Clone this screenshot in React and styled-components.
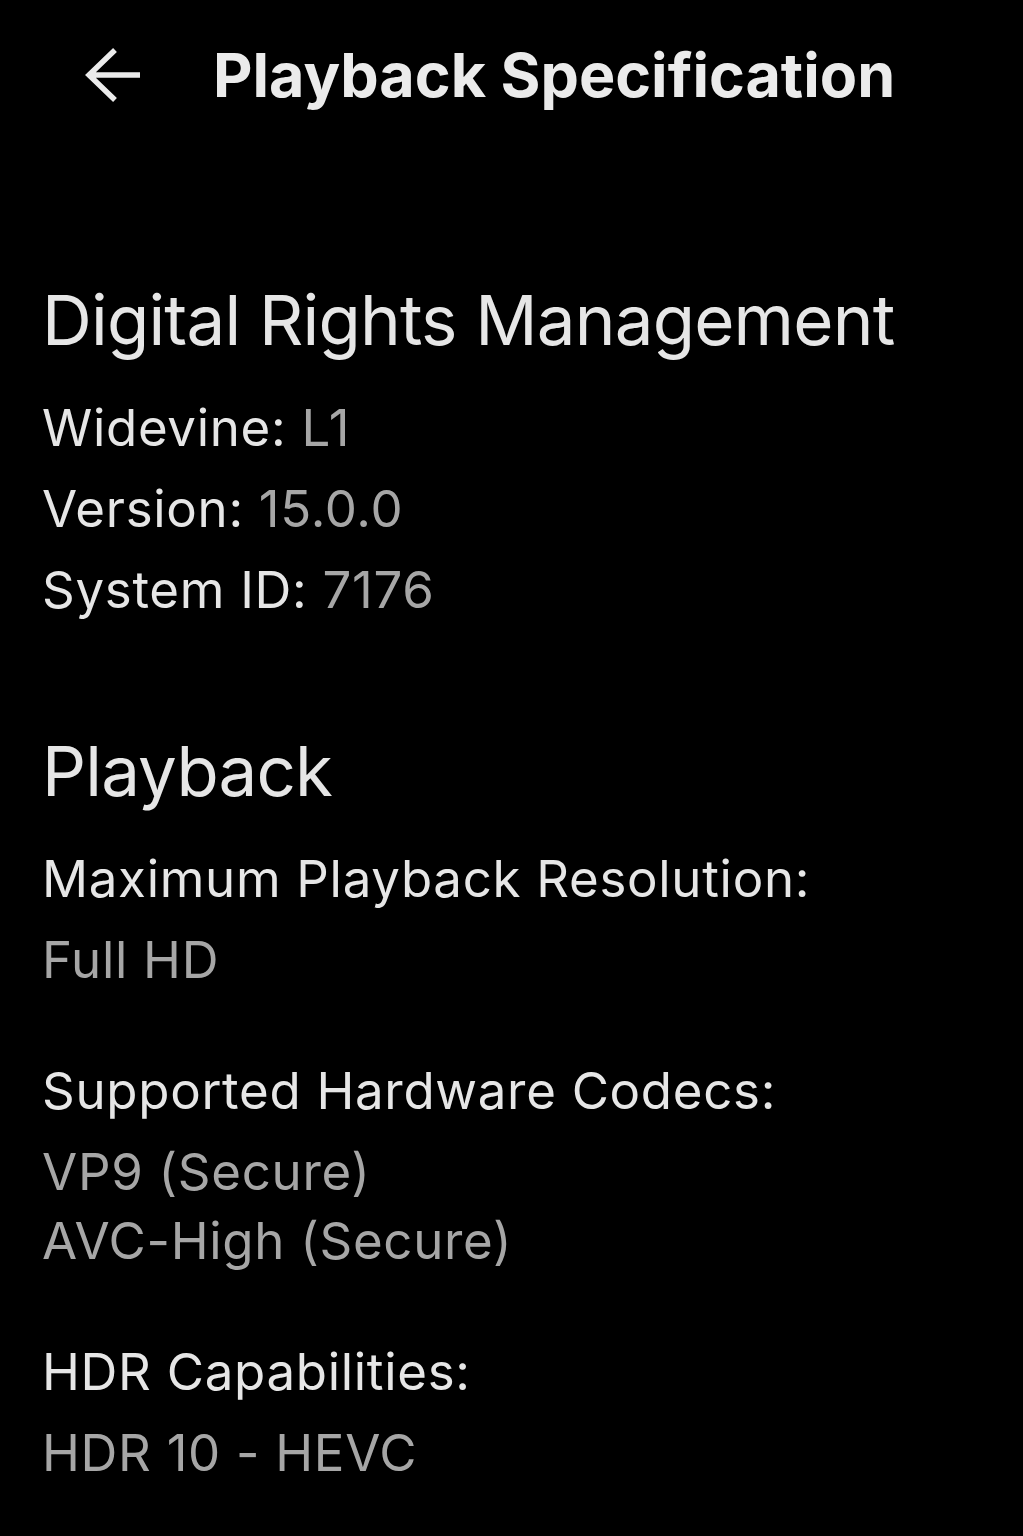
import React from 'react';
import styled, { createGlobalStyle } from 'styled-components';

const GlobalStyle = createGlobalStyle`
  body {
    margin: 0;
    background-color: #000;
    font-family: Inter, Roboto, "Liberation Sans", sans-serif;
  }
`;

const Page = styled.div`
  width: 1023px;
  min-height: 1536px;
  background-color: #000;
  color: #e6e6e6;
`;

const Header = styled.header`
  display: flex;
  align-items: center;
  gap: 72px;
  height: 150px;
  padding-left: 85px;
`;

const BackButton = styled.button`
  display: flex;
  padding: 0;
  border: none;
  background: none;
  color: #ebebeb;
  cursor: pointer;
`;

const Title = styled.h1`
  margin: 0;
  font-size: 61px;
  line-height: 80px;
  font-weight: 700;
  color: #ebebeb;
`;

const Content = styled.main`
  padding: 0 42px;
`;

const Section = styled.section`
  margin-top: ${props => props.first ? '130px' : '107px'};
`;

const Heading = styled.h2`
  margin: 0 0 33px;
  font-size: 69px;
  line-height: 80px;
  font-weight: 400;
  letter-spacing: -0.8px;
  color: #e6e6e6;
`;

const Row = styled.div`
  font-size: 51px;
  line-height: 69px;
  letter-spacing: 0.7px;
  margin-bottom: 12px;
  color: #e6e6e6;

  &:last-child {
    margin-bottom: 0;
  }
`;

const Value = styled.span`
  color: #a6a6a6;
`;

const Group = styled.div`
  margin-bottom: 62px;

  &:last-child {
    margin-bottom: 0;
  }
`;

const Label = styled.div`
  font-size: 51px;
  line-height: 69px;
  letter-spacing: 0.7px;
  margin-bottom: 12px;
  color: #e6e6e6;
`;

const ValueLine = styled.div`
  font-size: 51px;
  line-height: 69px;
  letter-spacing: 0.7px;
  color: #a6a6a6;
`;

const drm = [
  { label: 'Widevine:', value: 'L1' },
  { label: 'Version:', value: '15.0.0' },
  { label: 'System ID:', value: '7176' },
];

const playback = [
  { label: 'Maximum Playback Resolution:', values: ['Full HD'] },
  { label: 'Supported Hardware Codecs:', values: ['VP9 (Secure)', 'AVC-High (Secure)'] },
  { label: 'HDR Capabilities:', values: ['HDR 10 - HEVC'] },
];

const BackArrow = () => (
  <svg width="56" height="54" viewBox="0 0 56 54" fill="none">
    <path d="M55 27H4M30 2L4 27L30 52" stroke="currentColor" strokeWidth="5.5" />
  </svg>
);

const App = () => {
  return (
    <Page>
      <GlobalStyle />
      <Header>
        <BackButton aria-label="Back"><BackArrow /></BackButton>
        <Title>Playback Specification</Title>
      </Header>
      <Content>
        <Section first>
          <Heading>Digital Rights Management</Heading>
          {drm.map(item => (
            <Row key={item.label}>
              {item.label} <Value>{item.value}</Value>
            </Row>
          ))}
        </Section>
        <Section>
          <Heading>Playback</Heading>
          {playback.map(group => (
            <Group key={group.label}>
              <Label>{group.label}</Label>
              {group.values.map(v => <ValueLine key={v}>{v}</ValueLine>)}
            </Group>
          ))}
        </Section>
      </Content>
    </Page>
  );
};

export default App;
